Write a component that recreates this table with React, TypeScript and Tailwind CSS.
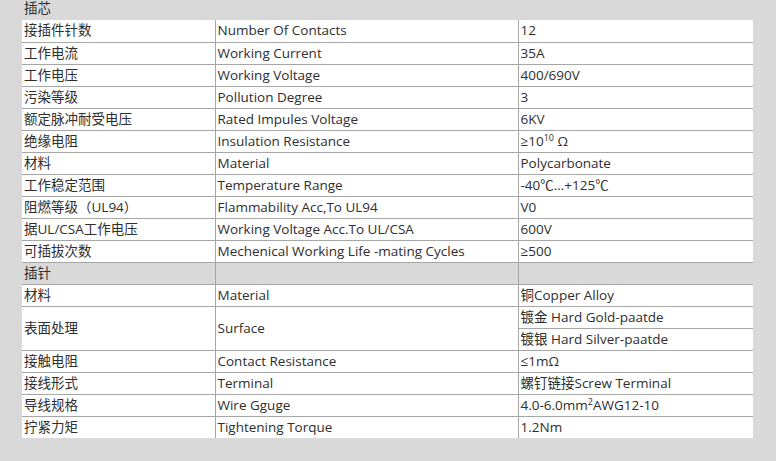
import type { ReactNode } from "react";

type Row = { cn: string; en: string; val: ReactNode };

const pinCore: Row[] = [
  { cn: "接插件针数", en: "Number Of Contacts", val: "12" },
  { cn: "工作电流", en: "Working Current", val: "35A" },
  { cn: "工作电压", en: "Working Voltage", val: "400/690V" },
  { cn: "污染等级", en: "Pollution Degree", val: "3" },
  { cn: "额定脉冲耐受电压", en: "Rated Impules Voltage", val: "6KV" },
  {
    cn: "绝缘电阻",
    en: "Insulation Resistance",
    val: (
      <>
        ≥10<sup className="text-[9px] top-[-5px]">10</sup> Ω
      </>
    ),
  },
  { cn: "材料", en: "Material", val: "Polycarbonate" },
  { cn: "工作稳定范围", en: "Temperature Range", val: "-40℃…+125℃" },
  { cn: "阻燃等级（UL94）", en: "Flammability Acc,To UL94", val: "V0" },
  { cn: "据UL/CSA工作电压", en: "Working Voltage Acc.To UL/CSA", val: "600V" },
  { cn: "可插拔次数", en: "Mechenical Working Life -mating Cycles", val: "≥500" },
];

const pinRows: Row[] = [
  { cn: "接触电阻", en: "Contact Resistance", val: "≤1mΩ" },
  { cn: "接线形式", en: "Terminal", val: "螺钉链接Screw Terminal" },
  {
    cn: "导线规格",
    en: "Wire Gguge",
    val: (
      <>
        4.0-6.0mm<sup className="text-[9px] top-[-5px]">2</sup>AWG12-10
      </>
    ),
  },
  { cn: "拧紧力矩", en: "Tightening Torque", val: "1.2Nm" },
];

const td = "border border-[#a6a6a6] bg-white h-[22px] px-[2px] py-0 align-middle whitespace-nowrap";

function DataRow({ row }: { row: Row }) {
  return (
    <tr>
      <td className={td}>{row.cn}</td>
      <td className={td}>{row.en}</td>
      <td className={td}>{row.val}</td>
    </tr>
  );
}

export default function App() {
  return (
    <div
      className="w-[776px] h-[461px] bg-[#d9d9d9] text-[#2e2e2e] text-[13.5px] leading-[21px] overflow-hidden"
      style={{ fontFamily: '"Open Sans", "Noto Sans CJK SC", sans-serif' }}
    >
      <div className="h-[20px] pl-[24px] leading-[17px]">插芯</div>
      <table className="ml-[22px] w-[731px] border-collapse border-hidden table-fixed">
        <colgroup>
          <col className="w-[193px]" />
          <col className="w-[303px]" />
          <col className="w-[235px]" />
        </colgroup>
        <tbody>
          {pinCore.map((r) => (
            <DataRow key={r.en + r.cn} row={r} />
          ))}
          <tr>
            <td className={td + " !bg-[#d9d9d9]"}>插针</td>
            <td className={td + " !bg-[#d9d9d9]"}></td>
            <td className={td + " !bg-[#d9d9d9]"}></td>
          </tr>
          <tr>
            <td className={td}>材料</td>
            <td className={td}>Material</td>
            <td className={td}>铜Copper Alloy</td>
          </tr>
          <tr>
            <td className={td} rowSpan={2}>
              表面处理
            </td>
            <td className={td} rowSpan={2}>
              Surface
            </td>
            <td className={td}>镀金 Hard Gold-paatde</td>
          </tr>
          <tr>
            <td className={td}>镀银 Hard Silver-paatde</td>
          </tr>
          {pinRows.map((r) => (
            <DataRow key={r.en} row={r} />
          ))}
        </tbody>
      </table>
    </div>
  );
}
